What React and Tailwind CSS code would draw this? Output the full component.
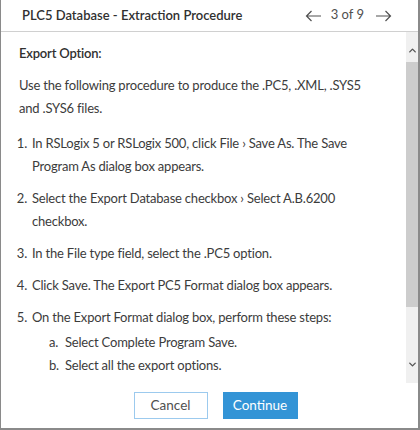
import { ChevronUp, ChevronDown } from "lucide-react";

const steps = [
  "In RSLogix 5 or RSLogix 500, click File › Save As. The Save Program As dialog box appears.",
  "Select the Export Database checkbox › Select A.B.6200 checkbox.",
  "In the File type field, select the .PC5 option.",
  "Click Save. The Export PC5 Format dialog box appears.",
  "On the Export Format dialog box, perform these steps:",
];

const subSteps = ["Select Complete Program Save.", "Select all the export options."];

const Arrow = ({ flip }) => (
  <svg
    width="17"
    height="12"
    viewBox="0 0 17 12"
    fill="none"
    stroke="currentColor"
    strokeWidth="1.2"
    className={flip ? "rotate-180" : ""}
  >
    <path d="M16 6H1.5M6.5 1L1.5 6l5 5" />
  </svg>
);

const App = () => {
  return (
    <div
      className="w-[420px] h-[430px] bg-white flex flex-col border-l border-r-2 border-b-2 border-[#8a8a8a] text-[#3c3c3c]"
      style={{ fontFamily: 'Lato, "Noto Sans", Arial, sans-serif' }}
    >
      {/* Header */}
      <div className="h-[32px] shrink-0 flex items-center justify-between border-b border-[#d0d0d0] pl-[21px] pr-[26px]">
        <h1 className="text-[13px] font-semibold text-[#303030]">
          PLC5 Database - Extraction Procedure
        </h1>
        <div className="flex items-center text-[13px] text-[#505050]">
          <Arrow />
          <span className="ml-[9px] mr-[11px] -mt-[2px]">3 of 9</span>
          <Arrow flip />
        </div>
      </div>

      {/* Body */}
      <div className="h-[351px] shrink-0 flex overflow-hidden">
        <div className="flex-1 overflow-hidden pl-[18px] pr-[36px] pt-[10px] text-[13px] tracking-[-0.2px] leading-[23px]">
          <p className="font-semibold text-[#303030]">Export Option:</p>
          <p className="mt-[9px]">
            Use the following procedure to produce the .PC5, .XML, .SYS5 and .SYS6 files.
          </p>
          <ol className="mt-[12px]">
            {steps.map((s, i) => (
              <li key={i} className="flex mb-[9px]">
                <span className="w-[14px] shrink-0 text-right -ml-[6px]">{i + 1}.</span>
                <div className="pl-[5px]">
                  <span>{s}</span>
                  {i === 4 && (
                    <ul className="mt-[2px]">
                      {subSteps.map((t, j) => (
                        <li key={j} className="flex pl-[17px]">
                          <span className="w-[16px] shrink-0">{j === 0 ? "a." : "b."}</span>
                          <span>{t}</span>
                        </li>
                      ))}
                    </ul>
                  )}
                </div>
              </li>
            ))}
          </ol>
        </div>

        {/* Scrollbar */}
        <div className="w-[12px] shrink-0 bg-[#f0f0f0] flex flex-col">
          <div className="h-[30px] flex items-end justify-center pb-[6px]">
            <ChevronUp className="w-[11px] h-[11px] text-[#555]" strokeWidth={3} />
          </div>
          <div className="h-[245px] bg-[#cdcdcd]" />
          <div className="flex-1 flex items-end justify-center pb-[13px]">
            <ChevronDown className="w-[11px] h-[11px] text-[#555]" strokeWidth={3} />
          </div>
        </div>
      </div>

      {/* Footer */}
      <div className="flex-1 flex items-start justify-center gap-[15px] pt-[9px] pl-[12px]">
        <button className="w-[74px] h-[27px] border border-[#9ccaee] bg-white text-[13.5px] text-[#505050]">
          Cancel
        </button>
        <button className="w-[75px] h-[27px] bg-[#3394d6] text-[13.5px] text-white">
          Continue
        </button>
      </div>
    </div>
  );
};

export default App;
